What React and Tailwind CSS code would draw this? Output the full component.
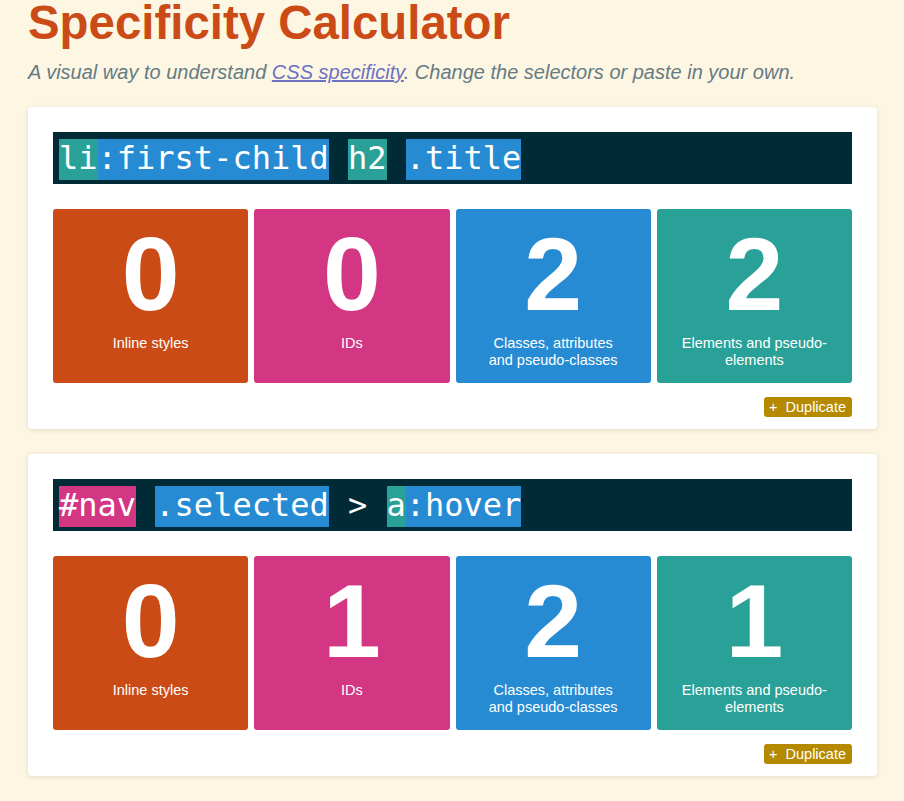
const parts = {
  orange: 'bg-[#cb4b16]',
  pink: 'bg-[#d33682]',
  blue: 'bg-[#268bd2]',
  teal: 'bg-[#2aa198]',
};

const calculators = [
  {
    selector: [
      [['li', 'teal'], [':first-child', 'blue']],
      [['h2', 'teal']],
      [['.title', 'blue']],
    ],
    counts: [0, 0, 2, 2],
  },
  {
    selector: [
      [['#nav', 'pink']],
      [['.selected', 'blue']],
      [['>', null]],
      [['a', 'teal'], [':hover', 'blue']],
    ],
    counts: [0, 1, 2, 1],
  },
];

const columns = [
  { color: 'orange', label: ['Inline styles'] },
  { color: 'pink', label: ['IDs'] },
  { color: 'blue', label: ['Classes, attributes', 'and pseudo-classes'] },
  { color: 'teal', label: ['Elements and pseudo-', 'elements'] },
];

function Selector({ groups }) {
  return (
    <div className="h-[52px] bg-[#002b36] pl-[6px] pt-[7px] text-[32px] leading-[38px] text-white font-['DejaVu_Sans_Mono',monospace] whitespace-pre">
      {groups.map((group, gi) => (
        <span key={gi}>
          {gi > 0 && ' '}
          {group.map(([text, color], i) => (
            <span key={i} className={color ? `${parts[color]} pb-[3px]` : ''}>
              {text}
            </span>
          ))}
        </span>
      ))}
    </div>
  );
}

function Calculator({ calc }) {
  return (
    <div className="bg-white rounded-[4px] shadow-[0_1px_5px_rgba(120,100,50,0.18)] px-[25px] pt-[25px] pb-[12px]">
      <Selector groups={calc.selector} />
      <div className="mt-[25px] grid grid-cols-4 gap-[6px]">
        {columns.map((col, i) => (
          <div
            key={i}
            className={`${parts[col.color]} h-[174px] rounded-[3px] flex flex-col items-center pt-[13px] text-white`}
          >
            <div className="text-[104px] leading-none font-bold">{calc.counts[i]}</div>
            <div className="mt-[9px] text-[14.5px] leading-[17px] text-center">
              {col.label.map((l) => (
                <div key={l} className="whitespace-nowrap">{l}</div>
              ))}
            </div>
          </div>
        ))}
      </div>
      <div className="mt-[14px] flex justify-end">
        <button className="h-[20px] bg-[#b58900] text-white rounded-[3px] pl-[5px] pr-[6px] text-[14.5px] leading-[20px]">
          +&nbsp; Duplicate
        </button>
      </div>
    </div>
  );
}

export default function App() {
  return (
    <div className="min-h-screen bg-[#fdf6e3] pl-[28px] pr-[27px] pb-[24px] font-['Liberation_Sans',Arial,sans-serif]">
      <h1 className="text-[47.4px] leading-[46px] font-bold text-[#cb4b16]">Specificity Calculator</h1>
      <p className="mt-[14px] mb-[23px] text-[20px] leading-[24px] italic text-[#657b83]">
        A visual way to understand{' '}
        <a href="#" className="text-[#6c71c4] underline">CSS specificity</a>. Change the selectors or paste in your own.
      </p>
      <div className="flex flex-col gap-[25px]">
        {calculators.map((calc, i) => (
          <Calculator key={i} calc={calc} />
        ))}
      </div>
    </div>
  );
}
